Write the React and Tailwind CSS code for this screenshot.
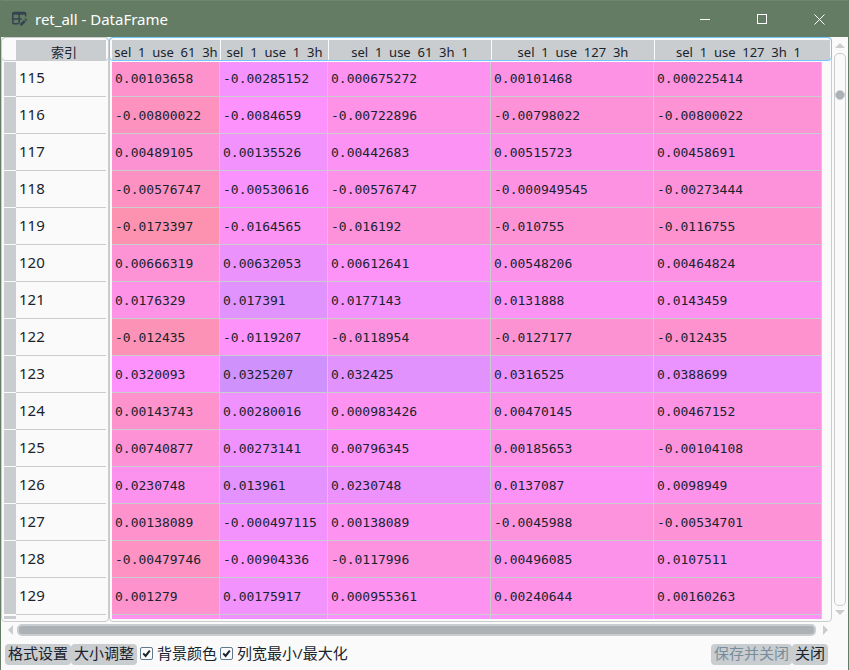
import React from "react";

const COLUMNS = [
  { name: "sel  1  use  61  3h", width: 108, base: 0.912, slope: 2.4 },
  { name: "sel  1  use  1  3h", width: 108, base: 0.818, slope: 1.72 },
  { name: "sel  1  use  61  3h  1", width: 163, base: 0.855, slope: 2.0 },
  { name: "sel  1  use  127  3h", width: 163, base: 0.873, slope: 2.1 },
  { name: "sel  1  use  127  3h  1", width: 168, base: 0.881, slope: 2.0 },
];

const ROWS = [
  [115, "0.00103658", "-0.00285152", "0.000675272", "0.00101468", "0.000225414"],
  [116, "-0.00800022", "-0.0084659", "-0.00722896", "-0.00798022", "-0.00800022"],
  [117, "0.00489105", "0.00135526", "0.00442683", "0.00515723", "0.00458691"],
  [118, "-0.00576747", "-0.00530616", "-0.00576747", "-0.000949545", "-0.00273444"],
  [119, "-0.0173397", "-0.0164565", "-0.016192", "-0.010755", "-0.0116755"],
  [120, "0.00666319", "0.00632053", "0.00612641", "0.00548206", "0.00464824"],
  [121, "0.0176329", "0.017391", "0.0177143", "0.0131888", "0.0143459"],
  [122, "-0.012435", "-0.0119207", "-0.0118954", "-0.0127177", "-0.012435"],
  [123, "0.0320093", "0.0325207", "0.032425", "0.0316525", "0.0388699"],
  [124, "0.00143743", "0.00280016", "0.000983426", "0.00470145", "0.00467152"],
  [125, "0.00740877", "0.00273141", "0.00796345", "0.00185653", "-0.00104108"],
  [126, "0.0230748", "0.013961", "0.0230748", "0.0137087", "0.0098949"],
  [127, "0.00138089", "-0.000497115", "0.00138089", "-0.0045988", "-0.00534701"],
  [128, "-0.00479746", "-0.00904336", "-0.0117996", "0.00496085", "0.0107511"],
  [129, "0.001279", "0.00175917", "0.000955361", "0.00240644", "0.00160263"],
];

// Values of the row that is cut off by the bottom of the viewport.
const NEXT_ROW = [0.022, 0.004, 0.014, 0.016, 0.018];

// Heat colour: saturation 0.7, full value, 60% over the light background.
function heat(column, value) {
  const hue = (column.base - column.slope * value) * 6;
  const channel = (n) => {
    const k = (n + hue) % 6;
    const level = 1 - 0.7 * Math.max(0, Math.min(k, 4 - k, 1));
    return Math.round(level * 153 + 100);
  };
  return `rgb(${channel(5)}, ${channel(3)}, ${channel(1)})`;
}

function FrameIcon() {
  return (
    <svg width="17" height="16" viewBox="0 0 17 16" fill="none" stroke="#36424f" strokeWidth="1.5" aria-hidden="true">
      <path d="M7.4 12.8H3A1.2 1.2 0 0 1 1.8 11.6V2.6A1.2 1.2 0 0 1 3 1.4H13.4A1.2 1.2 0 0 1 14.6 2.6V5.4" />
      <path d="M1.8 2.5H14.6" strokeWidth="2.4" />
      <path d="M1.8 8H10.8M8.2 3V12.8" />
      <path d="M9 14.8L9.3 12.6L12.9 8.9L14.8 10.8L11.2 14.5Z" fill="#36424f" stroke="none" />
      <path d="M13.5 8.2L14.5 7.2L16.4 9.1L15.4 10.1Z" fill="#36424f" stroke="none" />
    </svg>
  );
}

function WindowButton({ label, children }) {
  return (
    <button type="button" aria-label={label} className="flex h-full w-[57px] items-center justify-center">
      <svg width="11" height="11" viewBox="0 0 11 11" fill="none" stroke="#ffffff" aria-hidden="true">
        {children}
      </svg>
    </button>
  );
}

function Pane({ className, headClass, children }) {
  return (
    <div className={`relative rounded-[4px] border border-[#c9cdd0] pt-[2px] pb-[2px] ${className}`}>
      {children}
      <span className={`pointer-events-none absolute -inset-x-px -top-px h-6 rounded-[4px] border ${headClass}`} />
    </div>
  );
}

function rowHeight(index) {
  return index === 0 ? "h-[35px]" : "h-[37px]";
}

function IndexTable() {
  return (
    <table className="w-[104px] table-fixed border-separate border-spacing-0">
      <colgroup>
        <col className="w-[14px]" />
        <col />
      </colgroup>
      <thead>
        <tr className="h-[22px]">
          <td className="p-0" />
          <th scope="col" className="p-0 align-top font-normal">
            <div className="h-5 bg-[#c9cdd0] pt-1 pl-[6px] text-[13px] leading-4">索引</div>
          </th>
        </tr>
      </thead>
      <tbody>
        {ROWS.map((row, i) => (
          <tr key={row[0]} className={rowHeight(i)}>
            <td className="border-b border-l-2 border-[#fafafa] bg-[#c9cdd0] p-0" />
            <th
              scope="row"
              className="border-b border-[#c9cdd0] p-0 pb-[9px] pl-[3px] text-left align-bottom text-[15px] leading-5 font-normal"
            >
              {row[0]}
            </th>
          </tr>
        ))}
        <tr className="h-1">
          <td className="border-t border-l-2 border-[#fafafa] bg-[#c9cdd0] p-0" />
          <td className="p-0" />
        </tr>
      </tbody>
    </table>
  );
}

function DataTable() {
  return (
    <table className="w-full table-fixed border-separate border-spacing-0">
      <colgroup>
        {COLUMNS.map((c) => (
          <col key={c.name} style={{ width: `${(c.width / 718) * 100}%` }} />
        ))}
        <col className="w-2" />
      </colgroup>
      <thead>
        <tr className="h-[22px]">
          {COLUMNS.map((c, i) => (
            <th key={c.name} scope="col" className="p-0 align-top font-normal">
              <div
                className={`h-5 bg-[#c9cdd0] pt-[2px] text-center text-[13px] leading-5 whitespace-pre ${i > 0 ? "border-l border-[#fafafa]" : ""}`}
              >
                {c.name}
              </div>
            </th>
          ))}
          <td className="p-0 align-top">
            <div className="h-5 bg-[#c9cdd0]" />
          </td>
        </tr>
      </thead>
      <tbody className="font-['DejaVu_Sans_Mono',monospace] text-[13px] leading-5">
        {ROWS.map((row, i) => (
          <tr key={row[0]} className={rowHeight(i)}>
            {COLUMNS.map((c, j) => (
              <td
                key={c.name}
                className="border-r border-b border-[#c9cdd0] p-0 pb-[7px] pl-[3px] align-bottom whitespace-nowrap"
                style={{ backgroundColor: heat(c, Number(row[j + 1])) }}
              >
                {row[j + 1]}
              </td>
            ))}
            <td className="p-0" />
          </tr>
        ))}
        <tr className="h-1">
          {COLUMNS.map((c, j) => (
            <td
              key={c.name}
              className="border-r border-[#c9cdd0] p-0"
              style={{ backgroundColor: heat(c, NEXT_ROW[j]) }}
            />
          ))}
          <td className="p-0" />
        </tr>
      </tbody>
    </table>
  );
}

function Triangle({ points, width, height }) {
  return (
    <svg width={width} height={height} viewBox={`0 0 ${width} ${height}`} className="shrink-0" aria-hidden="true">
      <polygon points={points} fill="#c9cdd0" />
    </svg>
  );
}

function VerticalScroll() {
  return (
    <div className="flex w-4 flex-col items-center gap-1 pt-[6px] pb-[6px]">
      <Triangle width={10} height={6} points="5,0 10,5 0,5" />
      <div className="flex w-3 flex-1 justify-center rounded-[5px] border border-[#c9cdd0] pt-9">
        <div className="size-[10px] shrink-0 rounded-full border border-[#c9cdd0] bg-[#acb1b6]" />
      </div>
      <Triangle width={10} height={6} points="0,0 10,0 5,5" />
    </div>
  );
}

function HorizontalScroll() {
  return (
    <div className="mt-[2px] flex h-3 items-center pr-[19px] pl-[6px]">
      <Triangle width={6} height={10} points="6,0 6,10 1,5" />
      <div className="mr-[7px] ml-1 h-3 flex-1 rounded-[5px] border-2 border-[#c9cdd0] bg-[#acb1b6]" />
      <Triangle width={6} height={10} points="0,0 5,5 0,10" />
    </div>
  );
}

function ToolButton({ children, disabled }) {
  return (
    <button
      type="button"
      disabled={disabled}
      className="h-[21px] rounded-[4px] bg-[#c9cdd0] px-[3px] pb-[2px] text-[15px] leading-[18px] whitespace-nowrap disabled:text-[#788d9c]"
    >
      {children}
    </button>
  );
}

function CheckOption({ id, children }) {
  return (
    <label htmlFor={id} className="flex items-center gap-1 pb-[2px] text-[15px] leading-5 whitespace-nowrap">
      <span className="relative size-[13px]">
        <input
          id={id}
          type="checkbox"
          defaultChecked
          className="block size-[13px] appearance-none rounded-[2px] border border-[#60798b] bg-[#fafafa]"
        />
        <svg className="pointer-events-none absolute inset-0" width="13" height="13" viewBox="0 0 13 13" fill="none" stroke="#19232d" strokeWidth="2" aria-hidden="true">
          <path d="M3.2 6.4L5.6 8.9L9.8 3.6" />
        </svg>
      </span>
      {children}
    </label>
  );
}

export default function App() {
  return (
    <div className="flex min-h-screen flex-col border-r border-b border-l border-[#647c64] bg-[#fafafa] font-['Noto_Sans','Noto_Sans_CJK_SC',sans-serif] text-[#19232d]">
      <header className="flex h-[37px] items-center border-t border-[#6f876f] bg-[#647c64] pl-[10px]">
        <FrameIcon />
        <h1 className="ml-[7px] flex-1 text-[15px] leading-5 text-white">ret_all - DataFrame</h1>
        <WindowButton label="最小化">
          <path d="M0 5.5H10" />
        </WindowButton>
        <WindowButton label="最大化">
          <rect x="0.5" y="0.5" width="9" height="9" />
        </WindowButton>
        <WindowButton label="关闭窗口">
          <path d="M0.5 0.5L10.5 10.5M10.5 0.5L0.5 10.5" />
        </WindowButton>
      </header>

      <main className="flex">
        <Pane className="w-[108px] shrink-0" headClass="border-[#c9cdd0]">
          <IndexTable />
        </Pane>
        <Pane className="flex-1 pr-px pl-[2px]" headClass="border-[#73c7ff]">
          <DataTable />
        </Pane>
        <VerticalScroll />
      </main>

      <HorizontalScroll />

      <footer className="flex items-center pt-[7px] pr-5 pb-[5px] pl-1">
        <ToolButton>格式设置</ToolButton>
        <ToolButton>大小调整</ToolButton>
        <div className="ml-[3px] flex flex-1 gap-[3px]">
          <CheckOption id="background-color">背景颜色</CheckOption>
          <CheckOption id="column-min-max">列宽最小/最大化</CheckOption>
        </div>
        <ToolButton disabled>保存并关闭</ToolButton>
        <ToolButton>关闭</ToolButton>
      </footer>
    </div>
  );
}
